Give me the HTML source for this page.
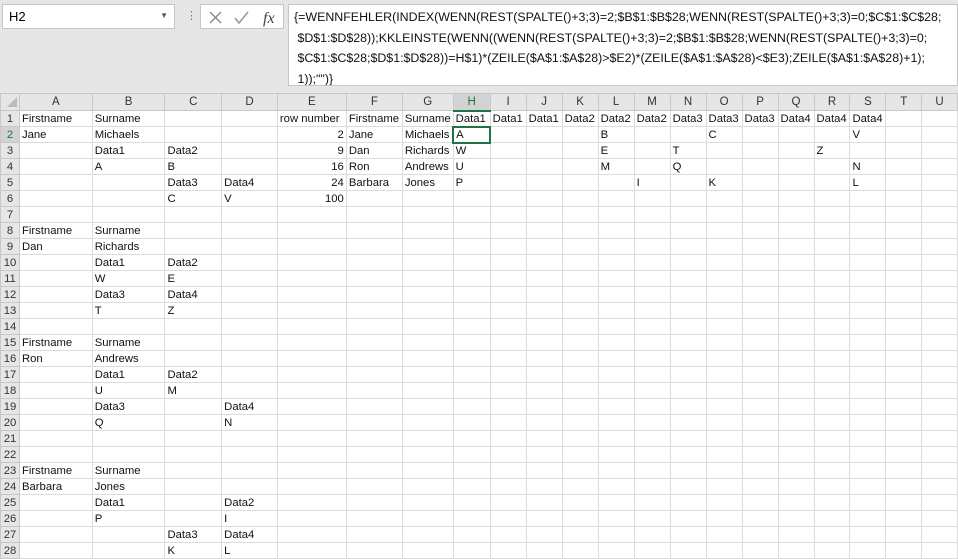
<!DOCTYPE html>
<html><head><meta charset="utf-8"><style>
*{margin:0;padding:0;box-sizing:border-box}
body{width:958px;height:558px;overflow:hidden;background:#e6e6e6;font-family:"Liberation Sans",Arial,sans-serif;position:relative}
.box{position:absolute;background:#fff;border:1px solid #c6c6c6}
#name{left:2px;top:4px;width:173px;height:25px;font-size:13px;padding:4px 6px}
#icons{left:200px;top:4px;width:84px;height:25px}
#fx{left:288px;top:4px;width:670px;height:82px;font-size:12.4px;line-height:20.5px;padding:2px 0 0 5px;color:#111;white-space:nowrap;overflow:hidden}
table{position:absolute;left:0;top:93px;border-collapse:collapse;table-layout:fixed;font-size:11.3px;color:#111}
td{height:16px;border:1px solid #dcdcdc;background:#fff;padding:0 2px;white-space:nowrap;overflow:hidden;line-height:14px}
tr.h td{background:#e6e6e6;border-color:#c8c8c8;text-align:center;color:#333;font-size:11.5px}
td.r{background:#e6e6e6;border-color:#c8c8c8;text-align:center;color:#333;padding:0}
td.n{text-align:right}
</style></head><body>
<div class="box" id="name">H2<span style="position:absolute;right:6px;top:6px;font-size:8px;color:#555">▼</span></div>
<div style="position:absolute;left:186px;top:9px;color:#777;font-size:11px">⋮</div>
<div class="box" id="icons">
<svg width="84" height="25" style="position:absolute;left:0;top:0"><path d="M9 7l11 11M20 7L9 18" stroke="#888" stroke-width="1.4" fill="none"/><path d="M34 13l4 5 9-11" stroke="#999" stroke-width="1.6" fill="none"/><text x="62" y="18" font-family="Liberation Serif" font-style="italic" font-size="16" fill="#444">fx</text></svg>
</div>
<div class="box" id="fx">{=WENNFEHLER(INDEX(WENN(REST(SPALTE()+3;3)=2;$B$1:$B$28;WENN(REST(SPALTE()+3;3)=0;$C$1:$C$28;<br>&nbsp;$D$1:$D$28));KKLEINSTE(WENN((WENN(REST(SPALTE()+3;3)=2;$B$1:$B$28;WENN(REST(SPALTE()+3;3)=0;<br>&nbsp;$C$1:$C$28;$D$1:$D$28))=H$1)*(ZEILE($A$1:$A$28)&gt;$E2)*(ZEILE($A$1:$A$28)&lt;$E3);ZEILE($A$1:$A$28)+1);<br>&nbsp;1));"")}</div>
<table id="t">
<colgroup><col style="width:19px"><col style="width:73px"><col style="width:73px"><col style="width:57px"><col style="width:56px"><col style="width:69px"><col style="width:56px"><col style="width:50px"><col style="width:37px"><col style="width:36px"><col style="width:36px"><col style="width:36px"><col style="width:36px"><col style="width:36px"><col style="width:36px"><col style="width:36px"><col style="width:36px"><col style="width:36px"><col style="width:36px"><col style="width:36px"><col style="width:36px"><col style="width:36px"></colgroup>
</table>
<script>
var cols="ABCDEFGHIJKLMNOPQRSTU".split("");
var d={1:{A:"Firstname",B:"Surname",E:"row number",F:"Firstname",G:"Surname",H:"Data1",I:"Data1",J:"Data1",K:"Data2",L:"Data2",M:"Data2",N:"Data3",O:"Data3",P:"Data3",Q:"Data4",R:"Data4",S:"Data4"},
2:{A:"Jane",B:"Michaels",E:"2",F:"Jane",G:"Michaels",H:"A",L:"B",O:"C",S:"V"},
3:{B:"Data1",C:"Data2",E:"9",F:"Dan",G:"Richards",H:"W",L:"E",N:"T",R:"Z"},
4:{B:"A",C:"B",E:"16",F:"Ron",G:"Andrews",H:"U",L:"M",N:"Q",S:"N"},
5:{C:"Data3",D:"Data4",E:"24",F:"Barbara",G:"Jones",H:"P",M:"I",O:"K",S:"L"},
6:{C:"C",D:"V",E:"100"},
8:{A:"Firstname",B:"Surname"},9:{A:"Dan",B:"Richards"},10:{B:"Data1",C:"Data2"},11:{B:"W",C:"E"},12:{B:"Data3",C:"Data4"},13:{B:"T",C:"Z"},
15:{A:"Firstname",B:"Surname"},16:{A:"Ron",B:"Andrews"},17:{B:"Data1",C:"Data2"},18:{B:"U",C:"M"},19:{B:"Data3",D:"Data4"},20:{B:"Q",D:"N"},
23:{A:"Firstname",B:"Surname"},24:{A:"Barbara",B:"Jones"},25:{B:"Data1",D:"Data2"},26:{B:"P",D:"I"},27:{C:"Data3",D:"Data4"},28:{C:"K",D:"L"}};
var h='<tr class="h"><td style="background:#e6e6e6"><svg width="12" height="12" style="position:relative;top:2px;left:2px"><path d="M11 1V11H1Z" fill="#bbb"/></svg></td>';
cols.forEach(function(c){h+=c=="H"?'<td style="background:#d3d3d3;color:#217346;border-bottom:2px solid #217346">H</td>':'<td>'+c+'</td>'});
h+='</tr>';
for(var r=1;r<=28;r++){var row=d[r]||{};
h+='<tr><td class="r"'+(r==2?' style="background:#d3d3d3;color:#217346"':'')+'>'+r+'</td>';
cols.forEach(function(c){var v=row[c]||"";var cls=(c=="E"&&r>1)?' class="n"':'';
var st=(c=="H"&&r==2)?' style="border:2px solid #217346"':'';
h+='<td'+cls+st+'>'+v+'</td>'});h+='</tr>';}
document.getElementById("t").innerHTML+=h;
</script>
</body></html>
